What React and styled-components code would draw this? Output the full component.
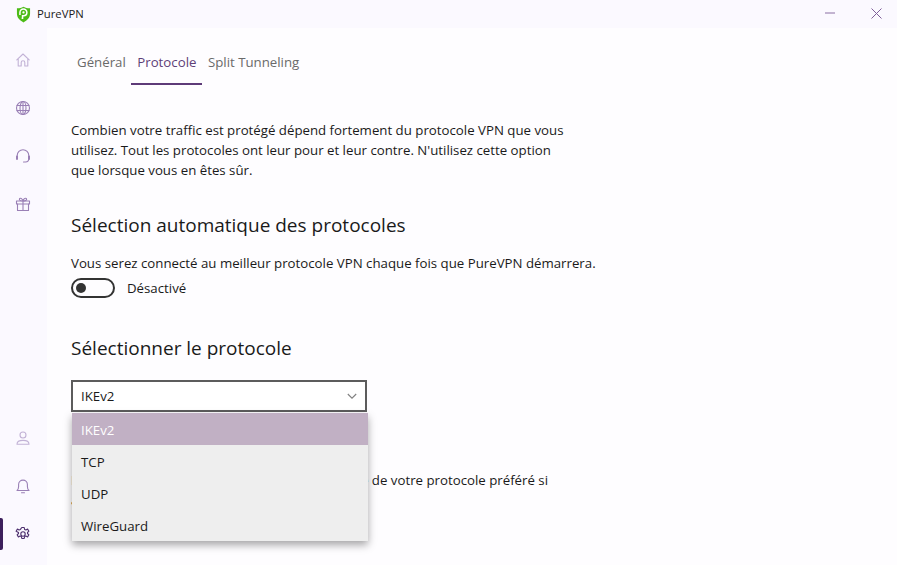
import React from 'react';
import styled, { createGlobalStyle } from 'styled-components';

const Global = createGlobalStyle`
  html, body { margin: 0; padding: 0; height: 100%; overflow: hidden; }
  body { font-family: "Open Sans", "Noto Sans", "Liberation Sans", sans-serif; background: #fefdff; }
  #root { height: 100%; }
`;

const Window = styled.div`
  width: 897px; height: 565px; display: flex; flex-direction: column; background: #fefdff; overflow: hidden;
`;
const TitleBar = styled.header`
  height: 28px; flex: none; background: #fbf9ff; display: flex; align-items: center; padding-left: 16px;
`;
const AppName = styled.span`
  margin-left: 6px; margin-top: -1px; font-size: 11.3px; color: #1b1b1b;
`;
const WindowButtons = styled.div`
  margin-left: auto; margin-right: -2px; align-self: flex-start; display: flex; align-items: center;
`;
const WindowButton = styled.button`
  width: 46px; height: 26px; border: 0; padding: 0; background: transparent; display: flex; align-items: center; justify-content: center;
`;
const Body = styled.div`
  flex: 1; display: flex; min-height: 0;
`;
const Sidebar = styled.nav`
  width: 47px; flex: none; box-sizing: border-box; padding: 16px 1px 15px 0; background: #fbf9ff; display: flex; flex-direction: column; justify-content: space-between;
`;
const NavGroup = styled.div`
  display: flex; flex-direction: column; gap: 16px;
`;
const NavItem = styled.div`
  position: relative; height: 32px; display: flex; align-items: center; justify-content: center; color: ${p => p.$active ? '#4d2f6e' : p.$strong ? '#9a80b6' : '#c2b2d6'};
  ${p => p.$active && `&::before { content: ""; position: absolute; left: 0; top: 0; width: 3px; height: 32px; background: #3c1f5c; border-radius: 0 2px 2px 0; }`}
`;
const Main = styled.main`
  flex: 1; padding: 17px 0 0 24px; position: relative; min-width: 0;
`;
const Tabs = styled.div`
  display: flex; height: 40px;
`;
const Tab = styled.div`
  padding: 0 5.5px 4px 6px; box-sizing: border-box; height: 40px; display: flex; align-items: center; font-size: 13.25px; color: ${p => p.$active ? '#5e3f78' : '#6a6a6a'};
  border-bottom: 2px solid ${p => p.$active ? '#5e3a78' : 'transparent'};
`;
const Paragraph = styled.p`
  margin: ${p => p.$top || 0}px 0 0; font-size: 13.25px; line-height: 20px; color: #1a1a1a;
`;
const Heading = styled.h2`
  margin: ${p => p.$top}px 0 0; font-size: 19px; line-height: 28px; font-weight: 400; color: #1a1a1a;
`;
const ToggleRow = styled.div`
  display: flex; align-items: center; gap: 12px; height: 20px; margin-top: 5px; font-size: 13.25px; color: #1a1a1a;
`;
const ToggleTrack = styled.div`
  width: 44px; height: 20px; box-sizing: border-box; border: 2px solid #333; border-radius: 10px; display: flex; align-items: center; padding-left: 3px;
`;
const ToggleThumb = styled.div`
  width: 10px; height: 10px; border-radius: 50%; background: #333;
`;
const Select = styled.div`
  width: 296px; height: 32px; box-sizing: border-box; margin-top: 18px; border: 2px solid #5c5c5c; background: #fff; display: flex; align-items: center; justify-content: space-between; padding: 0 8px; font-size: 13.25px; color: #1a1a1a;
`;
const Menu = styled.ul`
  position: absolute; left: 25px; top: 385px; width: 296px; margin: 0; padding: 0; list-style: none; background: #eeeeee; box-shadow: 0 4px 8px rgba(0,0,0,.35); font-size: 13.25px; color: #1a1a1a;
`;
const MenuItem = styled.li`
  height: 32px; box-sizing: border-box; padding: 2px 0 0 9px; display: flex; align-items: center; background: ${p => p.$selected ? '#c1b0c4' : 'transparent'}; color: ${p => p.$selected ? '#fff' : '#1a1a1a'};
`;

const Icon = ({ children }) => (
  <svg width="16" height="16" viewBox="0 0 16 16" fill="none" stroke="currentColor" strokeWidth="1.1" strokeLinecap="round" strokeLinejoin="round">{children}</svg>
);

export default function App() {
  return (
    <Window>
      <Global />
      <TitleBar>
        <svg width="15" height="17" viewBox="0 0 16 18">
          <path d="M1 2.2 C3 2.4 5.5 1.8 8 .6 C10.5 1.8 13 2.4 15 2.2 L15 8 C15 12.5 12 15.5 8 17.4 C4 15.5 1 12.5 1 8 Z" fill="#4cbb17" />
          <path d="M4.2 9.5 V6.8 A3.6 3.6 0 0 1 11.6 6.8 A3.6 3.4 0 0 1 8 10.2 H7 V13 H6" fill="none" stroke="#fff" strokeWidth="1.6" />
          <circle cx="8" cy="6.8" r="1.2" fill="#fff" />
        </svg>
        <AppName>PureVPN</AppName>
        <WindowButtons>
          <WindowButton>
            <svg width="10" height="10" viewBox="0 0 10 10"><path d="M0 5 H10" stroke="#8a6ea3" strokeWidth="1" /></svg>
          </WindowButton>
          <WindowButton>
            <svg width="11" height="11" viewBox="0 0 11 11"><path d="M.5 .5 L10.5 10.5 M10.5 .5 L.5 10.5" stroke="#7f5f99" strokeWidth="1" /></svg>
          </WindowButton>
        </WindowButtons>
      </TitleBar>
      <Body>
        <Sidebar>
          <NavGroup>
            <NavItem><Icon><path d="M1.8 7.8 8 2l6.200 5.800M3.2 6.5V14h3V10.5a1.8 1.8 0 0 1 3.600 0V14h3V6.500" /></Icon></NavItem>
            <NavItem $strong><Icon><circle cx="8" cy="8" r="6.5" /><ellipse cx="8" cy="8" rx="3" ry="6.5" /><path d="M8 1.5v13M2 5.500h12M2 10.500h12" /></Icon></NavItem>
            <NavItem $strong><Icon><path d="M2.2 9V7.5a5.8 5.8 0 0 1 11.600 0V9M13.800 10.500c0 2.200-1.500 3.500-3.300 3.500H8.500" /><path d="M2 8.500v2.500M14 8.500v2.500" strokeWidth="2" /></Icon></NavItem>
            <NavItem $strong><Icon><rect x="1.5" y="5" width="13" height="3" /><path d="M2.5 8v6.500h11V8M8 5v9.500M8 5C5 5 4 4 4.500 2.800S7.500 2.500 8 5c.5-2.500 3-3.200 3.500-2.200S11 5 8 5Z" /></Icon></NavItem>
          </NavGroup>
          <NavGroup>
            <NavItem><Icon><circle cx="8" cy="5" r="3" /><path d="M2 14.200c0-2.600 2.200-3.800 6-3.800s6 1.200 6 3.800Z" /></Icon></NavItem>
            <NavItem $strong><Icon><path d="M2 12.500h12c-1.200-1-1.600-2-1.600-4V6.500a4.400 4.400 0 0 0-8.800 0v2c0 2-.4 3-1.600 4ZM6.500 14.800h3" /></Icon></NavItem>
            <NavItem $active><Icon><circle cx="8" cy="8" r="2.200" /><path d="M6.800 1.500h2.400l.4 1.900 1.300.6 1.700-.9 1.300 2.100-1.400 1.300v1l1.400 1.300-1.300 2.100-1.700-.9-1.300.6-.4 1.900H6.800l-.4-1.900-1.300-.6-1.700.9-1.300-2.100 1.400-1.300v-1L1.100 5.200l1.300-2.100 1.700.9 1.300-.6Z" /></Icon></NavItem>
          </NavGroup>
        </Sidebar>
        <Main>
          <Tabs>
            <Tab>Général</Tab>
            <Tab $active>Protocole</Tab>
            <Tab>Split Tunneling</Tab>
          </Tabs>
          <Paragraph $top={35}>
            Combien votre traffic est protégé dépend fortement du protocole VPN que vous<br />
            utilisez. Tout les protocoles ont leur pour et leur contre. N'utilisez cette option<br />
            que lorsque vous en êtes sûr.
          </Paragraph>
          <Heading $top={31}>Sélection automatique des protocoles</Heading>
          <Paragraph $top={14}>Vous serez connecté au meilleur protocole VPN chaque fois que PureVPN démarrera.</Paragraph>
          <ToggleRow><ToggleTrack><ToggleThumb /></ToggleTrack>Désactivé</ToggleRow>
          <Heading $top={36}>Sélectionner le protocole</Heading>
          <Select>
            IKEv2
            <svg width="10" height="10" viewBox="0 0 10 10"><path d="M.8 3 5 7.2 9.2 3" fill="none" stroke="#808080" strokeWidth="1.1" /></svg>
          </Select>
          <Paragraph $top={58}>
            PureVPN passe automatiquement lors de panne de votre protocole préféré si<br />
            activé.
          </Paragraph>
          <Menu>
            <MenuItem $selected>IKEv2</MenuItem>
            <MenuItem>TCP</MenuItem>
            <MenuItem>UDP</MenuItem>
            <MenuItem>WireGuard</MenuItem>
          </Menu>
        </Main>
      </Body>
    </Window>
  );
}
